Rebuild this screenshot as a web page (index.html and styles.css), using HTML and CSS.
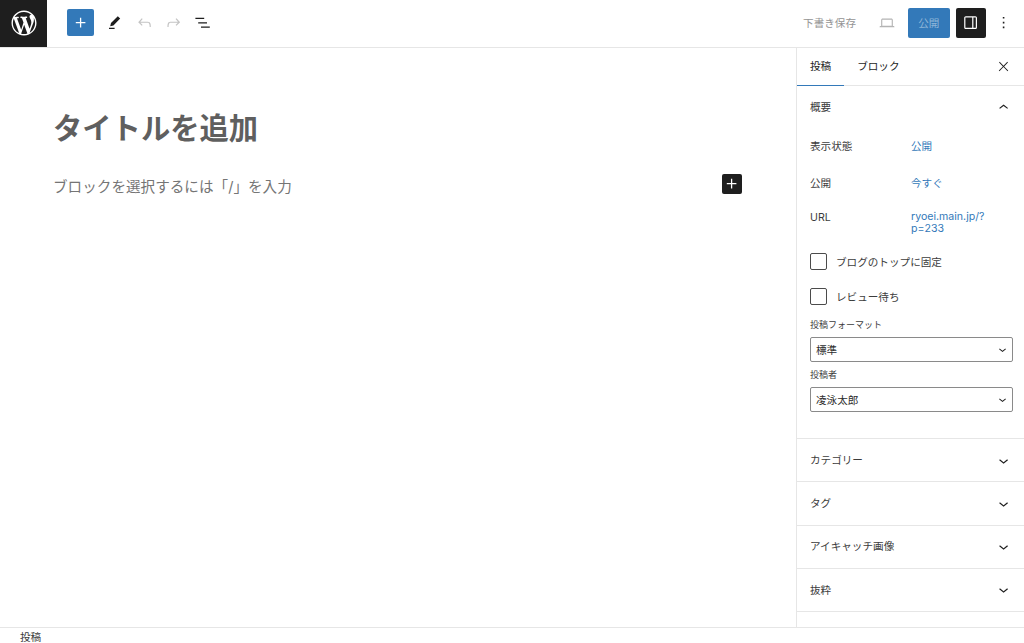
FILE: index.html
```html
<!DOCTYPE html>
<html lang="ja">
<head>
<meta charset="utf-8">
<title>投稿を編集</title>
<link rel="stylesheet" href="styles.css">
</head>
<body>
<div class="app">
  <header class="topbar">
    <a class="logo"><svg class="logo-icon" viewBox="-2 -2 24 24"><path d="M20 10c0-5.51-4.49-10-10-10C4.48 0 0 4.49 0 10c0 5.52 4.48 10 10 10 5.51 0 10-4.48 10-10zM7.78 15.37L4.37 6.22c.55-.02 1.17-.08 1.17-.08.5-.06.44-1.13-.06-1.11 0 0-1.45.11-2.37.11-.18 0-.37 0-.58-.01C4.12 2.69 6.87 1.11 10 1.11c2.33 0 4.45.87 6.05 2.34-.68-.11-1.65.39-1.65 1.58 0 .74.45 1.36.9 2.1.35.61.55 1.36.55 2.46 0 1.49-1.4 5-1.4 5l-3.03-8.37c.54-.02.82-.17.82-.17.5-.05.44-1.25-.06-1.22 0 0-1.44.12-2.38.12-.87 0-2.33-.12-2.33-.12-.5-.03-.56 1.2-.06 1.22l.92.08 1.26 3.41zM17.41 10c.24-.64.74-1.87.43-4.25.7 1.29 1.05 2.71 1.05 4.25 0 3.29-1.73 6.24-4.4 7.78.97-2.59 1.94-5.2 2.92-7.78zM6.1 18.09C3.12 16.65 1.11 13.53 1.11 10c0-1.3.23-2.48.72-3.59C3.25 10.3 4.67 14.2 6.1 18.09zm4.03-6.63l2.58 6.98c-.86.29-1.76.45-2.71.45-.79 0-1.57-.11-2.29-.33.81-2.38 1.62-4.74 2.42-7.1z"/></svg></a>
    <div class="tools">
      <button class="add"><svg class="icon" viewBox="0 0 24 24"><path d="M18 11.2h-5.2V6h-1.6v5.2H6v1.6h5.2V18h1.6v-5.2H18z"/></svg></button>
      <svg class="icon tool" viewBox="0 0 24 24"><path d="m19 7-3-3-8.5 8.5-1 4 4-1L19 7Zm-7 11.5H5V20h7v-1.5Z"/></svg>
      <svg class="icon tool off" viewBox="0 0 24 24"><path d="M18.3 11.7c-.6-.6-1.4-.9-2.3-.9H6.7l2.9-3.3-1.1-1-4.5 5L8.5 16l1-1-2.7-2.7H16c.5 0 .9.2 1.3.5 1 1 1 3.4 1 4.5v.3h1.5v-.2c0-1.5 0-4.3-1.5-5.7z"/></svg>
      <svg class="icon tool off" viewBox="0 0 24 24"><path d="M15.6 6.5l-1.1 1 2.9 3.3H8c-.9 0-1.7.3-2.3.9-1.4 1.5-1.4 4.2-1.4 5.6v.2h1.5v-.3c0-1.1 0-3.5 1-4.5.3-.3.7-.5 1.3-.5h9.2L14.5 15l1.1 1.1 4.6-4.6-4.6-5z"/></svg>
      <svg class="icon tool" viewBox="0 0 24 24"><path d="M3 6h11v1.5H3V6Zm3.5 5.5h11V13h-11v-1.5ZM21 17H10v1.5h11V17Z"/></svg>
    </div>
    <div class="actions">
      <span class="draft">下書き保存</span>
      <svg class="icon preview" viewBox="0 0 24 24"><path d="M20.5 16h-.7V8c0-1.1-.9-2-2-2H6.2c-1.1 0-2 .9-2 2v8h-.7c-.8 0-1.5.7-1.5 1.5h20c0-.8-.7-1.5-1.5-1.5zM5.7 8c0-.3.2-.5.5-.5h11.6c.3 0 .5.2.5.5v7.6H5.7V8z"/></svg>
      <button class="publish">公開</button>
      <button class="toggle"><svg class="icon" viewBox="0 0 24 24"><path d="M18 4H6c-1.1 0-2 .9-2 2v12c0 1.1.9 2 2 2h12c1.1 0 2-.9 2-2V6c0-1.1-.9-2-2-2zm-4 14.5H6c-.3 0-.5-.2-.5-.5V6c0-.3.2-.5.5-.5h8v13zm4.5-.5c0 .3-.2.5-.5.5h-2.5v-13H18c.3 0 .5.2.5.5v12z"/></svg></button>
      <svg class="icon more" viewBox="0 0 24 24"><path d="M13 19h-2v-2h2v2zm0-6h-2v-2h2v2zm0-6h-2V5h2v2z"/></svg>
    </div>
  </header>
  <div class="main">
    <main class="canvas">
      <h1 class="post-title">タイトルを追加</h1>
      <div class="placeholder">
        <span class="placeholder-text">ブロックを選択するには「/」を入力</span>
        <button class="inline-add"><svg class="icon" viewBox="0 0 24 24"><path d="M18 11.2h-5.2V6h-1.6v5.2H6v1.6h5.2V18h1.6v-5.2H18z"/></svg></button>
      </div>
    </main>
    <aside class="sidebar">
      <div class="tabs">
        <span class="tab active">投稿</span>
        <span class="tab">ブロック</span>
        <svg class="icon close" viewBox="0 0 24 24"><path d="M13 11.8l6.1-6.3-1-1-6.1 6.2-6.1-6.2-1 1 6.1 6.3-6.5 6.7 1 1 6.5-6.6 6.5 6.6 1-1z"/></svg>
      </div>
      <section class="summary">
        <div class="panel-head"><span>概要</span><svg class="icon chev chev-up" viewBox="0 0 24 24"><path d="M6.5 12.4L12 8l5.5 4.4-.9 1.2L12 10l-4.5 3.6-1-1.2z"/></svg></div>
        <div class="row row-vis"><span class="key">表示状態</span><a class="val">公開</a></div>
        <div class="row row-pub"><span class="key">公開</span><a class="val">今すぐ</a></div>
        <div class="row row-url"><span class="key">URL</span><a class="val val-url">ryoei.main.jp/?<br>p=233</a></div>
        <label class="check check-sticky"><span class="box"></span>ブログのトップに固定</label>
        <label class="check check-review"><span class="box"></span>レビュー待ち</label>
        <div class="field-label first">投稿フォーマット</div>
        <div class="select"><span>標準</span><svg class="sel-chev" viewBox="0 0 24 24"><path d="M17.5 11.6L12 16l-5.5-4.4.9-1.2L12 14l4.5-3.6 1 1.2z"/></svg></div>
        <div class="field-label">投稿者</div>
        <div class="select"><span>凌泳太郎</span><svg class="sel-chev" viewBox="0 0 24 24"><path d="M17.5 11.6L12 16l-5.5-4.4.9-1.2L12 14l4.5-3.6 1 1.2z"/></svg></div>
      </section>
      <div class="panel-head closed"><span>カテゴリー</span><svg class="icon chev" viewBox="0 0 24 24"><path d="M17.5 11.6L12 16l-5.5-4.4.9-1.2L12 14l4.5-3.6 1 1.2z"/></svg></div>
      <div class="panel-head closed"><span>タグ</span><svg class="icon chev" viewBox="0 0 24 24"><path d="M17.5 11.6L12 16l-5.5-4.4.9-1.2L12 14l4.5-3.6 1 1.2z"/></svg></div>
      <div class="panel-head closed"><span>アイキャッチ画像</span><svg class="icon chev" viewBox="0 0 24 24"><path d="M17.5 11.6L12 16l-5.5-4.4.9-1.2L12 14l4.5-3.6 1 1.2z"/></svg></div>
      <div class="panel-head closed"><span>抜粋</span><svg class="icon chev" viewBox="0 0 24 24"><path d="M17.5 11.6L12 16l-5.5-4.4.9-1.2L12 14l4.5-3.6 1 1.2z"/></svg></div>
    </aside>
  </div>
  <footer class="statusbar">投稿</footer>
</div>
</body>
</html>
```
FILE: styles.css
```css
* { box-sizing: border-box; }
html, body { margin: 0; height: 100%; overflow: hidden; }
body {
  font-family: Inter, "Noto Sans CJK JP", sans-serif;
  font-size: 10.6px;
  color: #3c3c3c;
  background: #fff;
}
button { border: 0; padding: 0; font: inherit; }
.app { display: flex; flex-direction: column; height: 643px; }
.icon { width: 19.2px; height: 19.2px; fill: currentColor; display: block; flex: none; }

.topbar { height: 48px; flex: none; display: flex; align-items: flex-start; border-bottom: 1px solid #e6e6e6; }
.logo { width: 47px; height: 47px; background: #1e1e1e; color: #fff; display: flex; align-items: center; justify-content: center; padding-bottom: 2px; }
.logo-icon { width: 30px; height: 30px; fill: #fff; }
.tools { display: flex; align-items: center; height: 45px; margin-left: 20px; gap: 10px; color: #1e1e1e; }
.add { width: 27px; height: 27px; border-radius: 2px; background: #3379b9; color: #fff; display: flex; align-items: center; justify-content: center; margin-right: 1.4px; }
.tool.off { color: #c4c4c4; }
.actions { margin-left: auto; display: flex; align-items: center; height: 45px; }
.draft { color: #949494; margin-right: 22px; white-space: nowrap; }
.preview { color: #b4b4b4; margin-right: 12px; width: 18px; height: 18px; }
.publish { width: 41.5px; height: 30px; border-radius: 2px; background: #3379b9; color: #8fb6d8; margin-right: 6.5px; }
.toggle { width: 30px; height: 30px; border-radius: 2px; background: #1e1e1e; color: #fff; display: flex; align-items: center; justify-content: center; margin-right: 8.4px; }
.more { color: #1e1e1e; margin-right: 10.4px; }

.main { flex: 1; display: flex; min-height: 0; }
.canvas { flex: 1; padding: 62px 54px 0 53px; }
.post-title { margin: 0; font-size: 29.3px; line-height: 38px; font-weight: 700; color: #5f5f5f; }
.placeholder { margin-top: 25px; height: 22px; display: flex; align-items: center; justify-content: space-between; font-size: 14.6px; color: #757575; }
.placeholder-text { padding-top: 2px; }
.inline-add { width: 20px; height: 20px; border-radius: 2px; background: #1e1e1e; color: #fff; display: flex; align-items: center; justify-content: center; margin-bottom: 1px; }

.sidebar { width: 228px; flex: none; border-left: 1px solid #e6e6e6; }
.tabs { height: 38px; display: flex; border-bottom: 1px solid #e6e6e6; align-items: center; }
.tab { height: 38px; line-height: 37px; padding: 0 13px; color: #1e1e1e; }
.tab.active { border-bottom: 1.5px solid #3379b9; margin-right: 13px; }
.tab + .tab { padding: 0; }
.close { margin-left: auto; margin-right: 13.5px; color: #1e1e1e; width: 15px; height: 15px; }

.summary { height: 353px; border-bottom: 1px solid #e6e6e6; }
.panel-head { height: 42px; display: flex; align-items: center; justify-content: space-between; padding: 0 11px 0 13px; color: #3c3c3c; }
.panel-head span { margin-bottom: 2px; }
.panel-head.closed { height: 43.3px; border-bottom: 1px solid #e6e6e6; }
.chev { color: #1e1e1e; }
.chev-up { margin-top: 2px; }
.row { display: flex; padding-left: 13px; line-height: 11px; }
.key { width: 101px; flex: none; }
.val { color: #3379b9; line-height: 12px; }
.val-url { margin: -1px 0 1px; }
.row-vis { margin-top: 13px; }
.row-pub { margin-top: 25px; }
.row-url { margin-top: 22px; }
.check { display: flex; align-items: center; padding-left: 13px; height: 17px; }
.check-sticky { margin-top: 16.5px; }
.check-review { margin-top: 18px; }
.box { width: 17px; height: 17px; border: 1px solid #1e1e1e; border-radius: 2px; margin-right: 9px; opacity: .8; }
.field-label { font-size: 9px; line-height: 11px; padding-left: 13px; margin-top: 7px; }
.field-label.first { margin-top: 14.5px; }
.select { margin: 7px 11px 0 13px; height: 25px; border: 1px solid #8a8a8a; border-radius: 2px; display: flex; align-items: center; justify-content: space-between; padding: 0 2px 0 5px; color: #2c2c2c; }
.sel-chev { width: 15px; height: 15px; fill: #1e1e1e; }

.statusbar { height: 16px; flex: none; border-top: 1px solid #e6e6e6; padding-left: 20px; line-height: 19px; color: #3c3c3c; overflow: hidden; }
```
